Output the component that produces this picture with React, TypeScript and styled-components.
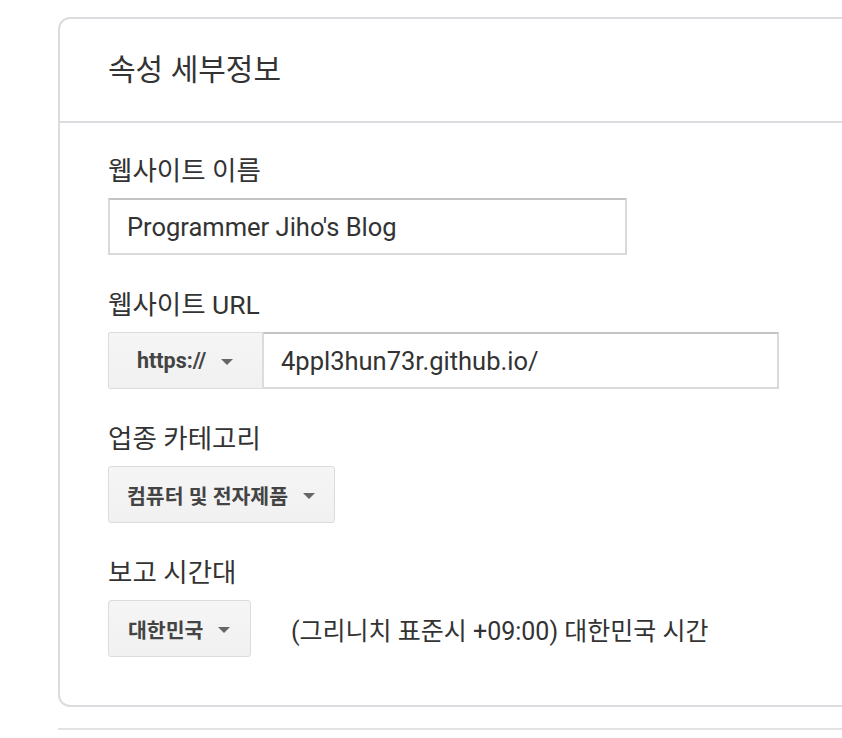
import React from "react";
import styled, { createGlobalStyle } from "styled-components";

const Global = createGlobalStyle`
  html, body { margin: 0; padding: 0; background: #ffffff; overflow: hidden; }
  body { font-family: Roboto, "Noto Sans CJK KR", sans-serif; color: #333333; }
`;

const Page = styled.div`
  padding: 17px 0 0 58px;
  width: 900px;
`;

const Card = styled.section`
  border: 2px solid #dcdce0;
  border-radius: 12px;
  background: #ffffff;
  width: 900px;
`;

const CardHeader = styled.header`
  box-sizing: border-box;
  height: 104px;
  display: flex;
  align-items: center;
  padding-left: 48px;
  border-bottom: 2px solid #dcdce0;
`;

const Title = styled.h2`
  margin: 0;
  font-size: 30px;
  line-height: 36px;
  font-weight: 400;
  color: #333333;
`;

const CardBody = styled.div`
  display: flex;
  flex-direction: column;
  gap: 35px;
  padding: 33px 48px 48px;
`;

const Field = styled.div`
  display: flex;
  flex-direction: column;
  gap: 12px;
  align-items: flex-start;
`;

const Label = styled.label`
  font-size: 26.5px;
  line-height: 30px;
  color: #333333;
  white-space: nowrap;
`;

const TextBox = styled.div<{ $width?: number }>`
  box-sizing: border-box;
  width: ${(p) => (p.$width ? `${p.$width}px` : "auto")};
  height: 57px;
  border: 2px solid #d9d9d9;
  border-top-color: #c4c4c4;
  display: flex;
  align-items: center;
  padding-left: 17px;
  font-size: 25.5px;
  color: #333333;
  background: #fff;
  white-space: nowrap;
`;

const Group = styled.div`
  display: flex;
  width: 671px;
  height: 57px;
`;

const Select = styled.div<{ $width: number; $pad: number; $size?: number; $joined?: boolean }>`
  box-sizing: border-box;
  width: ${(p) => p.$width}px;
  height: 57px;
  display: flex;
  align-items: center;
  gap: 15px;
  padding-left: ${(p) => p.$pad}px;
  background: linear-gradient(#f5f5f5, #f1f1f1);
  border: 1px solid #dcdcdc;
  border-radius: ${(p) => (p.$joined ? "2px 0 0 2px" : "3px")};
  font-size: ${(p) => p.$size ?? 20.5}px;
  font-weight: 700;
  color: #444444;
  flex-shrink: 0;
  white-space: nowrap;
`;

const Caret = styled.span`
  width: 0;
  height: 0;
  border-left: 6px solid transparent;
  border-right: 6px solid transparent;
  border-top: 6px solid #666666;
  margin-top: 2px;
`;

const GroupInput = styled(TextBox)`
  flex: 1;
  border-left: 1px solid #dcdcdc;
`;

const Row = styled.div`
  display: flex;
  align-items: center;
  gap: 40px;
`;

const Note = styled.span`
  font-size: 25px;
  color: #333333;
  white-space: nowrap;
`;

const BottomRule = styled.div`
  margin-top: 21px;
  height: 2px;
  background: #e3e3e6;
  width: 900px;
`;

export default function App() {
  return (
    <>
      <Global />
      <Page>
        <Card>
          <CardHeader>
            <Title>속성 세부정보</Title>
          </CardHeader>
          <CardBody>
            <Field>
              <Label>웹사이트 이름</Label>
              <TextBox $width={519}>Programmer Jiho's Blog</TextBox>
            </Field>
            <Field>
              <Label>웹사이트 URL</Label>
              <Group>
                <Select $width={155} $pad={28} $size={21.5} $joined>
                  https://
                  <Caret />
                </Select>
                <GroupInput>4ppl3hun73r.github.io/</GroupInput>
              </Group>
            </Field>
            <Field>
              <Label>업종 카테고리</Label>
              <Select $width={227} $pad={18}>
                컴퓨터 및 전자제품
                <Caret />
              </Select>
            </Field>
            <Field>
              <Label>보고 시간대</Label>
              <Row>
                <Select $width={143} $pad={19}>
                  대한민국
                  <Caret />
                </Select>
                <Note>(그리니치 표준시 +09:00) 대한민국 시간</Note>
              </Row>
            </Field>
          </CardBody>
        </Card>
        <BottomRule />
      </Page>
    </>
  );
}
